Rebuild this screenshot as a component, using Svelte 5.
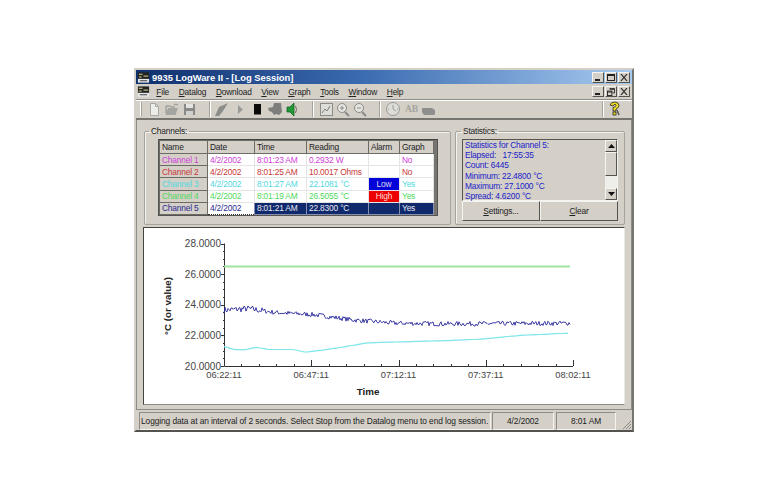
<script>
  const rows = [
    { name: 'Channel 1', c: '#d040d8', date: '4/2/2002', time: '8:01:23 AM', reading: '0.2932 W', alarm: '', graph: 'No' },
    { name: 'Channel 2', c: '#c83838', date: '4/2/2002', time: '8:01:25 AM', reading: '10.0017 Ohms', alarm: '', graph: 'No' },
    { name: 'Channel 3', c: '#50d8e0', date: '4/2/2002', time: '8:01:27 AM', reading: '22.1081 °C', alarm: 'Low', al: 'low', graph: 'Yes' },
    { name: 'Channel 4', c: '#50d860', date: '4/2/2002', time: '8:01:19 AM', reading: '26.5055 °C', alarm: 'High', al: 'high', graph: 'Yes' },
    { name: 'Channel 5', c: '#fff', nc: '#2a2a90', date: '4/2/2002', time: '8:01:21 AM', reading: '22.8300 °C', alarm: '', graph: 'Yes', sel: true }
  ];
  const stats = ['Statistics for Channel 5:', 'Elapsed:   17:55:35', 'Count: 6445', 'Minimum: 22.4800 °C', 'Maximum: 27.1000 °C', 'Spread: 4.6200 °C'];
  const menu = [['F', 'ile'], ['D', 'atalog'], ['D', 'ownload'], ['V', 'iew'], ['G', 'raph'], ['T', 'ools'], ['W', 'indow'], ['H', 'elp']];

  const X0 = 80, X1 = 429, YB = 138, YT = 15.5;
  const yOf = (v) => YB - ((v - 20) / 8) * (YB - YT);
  let seed = 7;
  const rnd = () => (seed = (seed * 16807) % 2147483647) / 2147483647;
  const interp = (pts, x) => {
    for (let i = 1; i < pts.length; i++) {
      if (x <= pts[i][0]) {
        const [a, b] = pts[i - 1], [c, d] = pts[i];
        return b + ((x - a) / (c - a)) * (d - b);
      }
    }
    return pts[pts.length - 1][1];
  };
  const blueBase = [[80, 23.65], [104, 23.75], [130, 23.5], [170, 23.35], [210, 23.0], [250, 22.8], [300, 22.75], [430, 22.8]];
  const cyanBase = [[80, 21.27], [90, 21.08], [100, 21.05], [112, 21.22], [125, 21.08], [150, 21.08], [161, 20.9], [180, 21.05], [200, 21.25], [222, 21.5], [240, 21.55], [300, 21.65], [336, 21.75], [376, 22.0], [426, 22.15]];
  let blue = '';
  for (let x = 80; x <= 426; x += 1) {
    const n = (rnd() - 0.5) * (x < 120 ? 0.42 : 0.3);
    blue += `${x === 80 ? 'M' : 'L'}${x} ${yOf(interp(blueBase, x) + n).toFixed(1)}`;
  }
  let cyan = '';
  for (let x = 80; x <= 426; x += 4) {
    cyan += `${x === 80 ? 'M' : 'L'}${x} ${yOf(interp(cyanBase, x)).toFixed(1)}`;
  }
  const yTicks = [28, 26, 24, 22, 20];
  const minorY = [];
  for (let v = 20; v <= 28; v += 0.5) minorY.push(v);
  const minorX = [];
  for (let i = 0; i <= 20; i++) minorX.push(X0 + (i * (X1 - X0)) / 20);
  const xLabels = ['06:22:11', '06:47:11', '07:12:11', '07:37:11', '08:02:11'];
</script>

<div class="page">
  <div class="win">
    <div class="title">
      <svg class="appicon" width="13" height="13" viewBox="0 0 14 13"><rect x="1" y="1" width="12" height="7" fill="#222"/><path d="M2 3h4M7 5h5M2 6h3" stroke="#e8e0a0"/><rect x="1" y="8" width="12" height="4" fill="#e8e8e8"/><path d="M3 10h8" stroke="#333"/></svg>
      <span class="ttext">9935 LogWare II - [Log Session]</span>
      <div class="caps">
        <span class="cap"><i class="min"></i></span>
        <span class="cap"><i class="max"></i></span>
        <span class="cap"><svg width="8" height="7" viewBox="0 0 9 8"><path d="M1 0l7 8M8 0l-7 8" stroke="#222" stroke-width="1.3"/></svg></span>
      </div>
    </div>

    <div class="menubar">
      <svg class="appicon" width="13" height="13" viewBox="0 0 14 13"><rect x="1" y="1" width="12" height="7" fill="#222"/><path d="M2 3h4M7 5h5M2 6h3" stroke="#e8e0a0"/><rect x="1" y="8" width="12" height="4" fill="#e8e8e8"/><path d="M3 10h8" stroke="#333"/></svg>
      <div class="menus">
        {#each menu as m}<span class="mi"><u>{m[0]}</u>{m[1]}</span>{/each}
      </div>
      <div class="caps">
        <span class="cap"><i class="min"></i></span>
        <span class="cap"><svg width="8" height="8" viewBox="0 0 9 9"><path d="M3 .5h5.500v5h-2M3 1.500h5.500" fill="none" stroke="#222"/><rect x=".5" y="3.500" width="5" height="5" fill="none" stroke="#222"/><path d="M0 4.500h6" stroke="#222"/></svg></span>
        <span class="cap"><svg width="8" height="7" viewBox="0 0 9 8"><path d="M1 0l7 8M8 0l-7 8" stroke="#222" stroke-width="1.3"/></svg></span>
      </div>
    </div>

    <div class="toolbar">
      <span class="grip"></span>
      <svg class="tb" width="60" height="18" viewBox="0 0 60 18">
        <path d="M5.500 3.500h5l3 3v9h-8z" fill="#ecece8" stroke="#a8a8a4"/><path d="M10.500 3.500v3h3" fill="none" stroke="#a8a8a4"/>
        <path d="M23 8h10l-2.500 7H20.500z" fill="#a4a4a0"/><path d="M21 13V6h4l1 1h4" fill="none" stroke="#8e8e8c"/><path d="M29 5q2-2 4 0" fill="none" stroke="#8e8e8c"/>
        <rect x="39" y="4" width="11" height="11" fill="#8a8a88"/><rect x="41" y="4" width="7" height="4" fill="#e4e4e0"/><rect x="41" y="11" width="7" height="4" fill="#d0d0cc"/>
      </svg>
      <span class="sep"></span>
      <svg class="tb" width="93" height="18" viewBox="0 0 93 18">
        <path d="M0 16 L4 7 L13 3 L8 11 L4 16z" fill="#8c8c8a"/>
        <path d="M23 5l5 4.500-5 4.500z" fill="#9a9a98"/>
        <rect x="39" y="4" width="7" height="10.500" fill="#0a0a0a"/>
        <path d="M53 8l5-1 1-4 7 0 1 9-3 3-3-1-2 1-2-3-3-1z" fill="#7e7e7c"/>
        <path d="M72 7h3l4-4v13l-4-4h-3z" fill="#1f9a35" stroke="#0d5a1c" stroke-width=".7"/><path d="M80.500 6q2 3.500 0 7" fill="none" stroke="#6a6a50"/>
      </svg>
      <span class="sep"></span>
      <svg class="tb" width="57" height="18" viewBox="0 0 57 18">
        <rect x="2.500" y="3.500" width="12" height="12" fill="#dcdcd8" stroke="#8a8a88"/><path d="M4 13l3-4 2 2 3-5" fill="none" stroke="#808080"/>
        <circle cx="24" cy="8" r="4.500" fill="#e4e4e0" stroke="#8a8a88"/><path d="M27 12l4 4" stroke="#8a8a88" stroke-width="2"/><path d="M22 8h4M24 6v4" stroke="#8a8a88"/>
        <circle cx="41" cy="8" r="4.500" fill="#e4e4e0" stroke="#8a8a88"/><path d="M44 12l4 4" stroke="#8a8a88" stroke-width="2"/><path d="M39 8h4" stroke="#8a8a88"/>
      </svg>
      <span class="sep"></span>
      <svg class="tb" width="16" height="18" viewBox="0 0 16 18"><circle cx="8" cy="9" r="6.500" fill="#dcdcd8" stroke="#9a9a98"/><path d="M8 5v4l3 2M3 9h1M12 9h1" fill="none" stroke="#9a9a98"/></svg>
      <span class="ab">AB</span>
      <svg class="tb blob" width="16" height="18" viewBox="0 0 16 18"><path d="M1 8h10l3 2v4l-1 1H3l-2-3z" fill="#8e8e8c"/></svg>
      <span class="spring"></span>
      <span class="sep end"></span>
      <svg class="tb help" width="18" height="18" viewBox="0 0 18 18"><path d="M5 5q1-3 5-3 4 .500 4 3.500 0 2-3 3.500v2H8V7.500q3-.500 3-2t-2-1L8 6z" fill="#f0e020" stroke="#222" stroke-width=".8"/><rect x="8" y="12" width="3" height="3" fill="#f0e020" stroke="#222" stroke-width=".8"/><path d="M12 10l2 5" stroke="#555" stroke-width="1.500"/></svg>
    </div>

    <div class="body">
      <div class="groups">
        <fieldset class="channels">
          <legend>Channels:</legend>
          <div class="gridwrap">
            <table>
              <colgroup><col class="c1"/><col class="c2"/><col class="c3"/><col class="c4"/><col class="c5"/><col class="c6"/></colgroup>
              <thead><tr><th>Name</th><th>Date</th><th>Time</th><th>Reading</th><th>Alarm</th><th>Graph</th></tr></thead>
              <tbody>
                {#each rows as r}
                  <tr class:sel={r.sel} style="color:{r.c}">
                    <th style="color:{r.nc ?? r.c}">{r.name}</th>
                    <td class:focus={r.sel}>{r.date}</td>
                    <td>{r.time}</td>
                    <td>{r.reading}</td>
                    <td class="alarm {r.al ?? ''}">{r.alarm}</td>
                    <td>{r.graph}</td>
                  </tr>
                {/each}
              </tbody>
            </table>
          </div>
        </fieldset>

        <fieldset class="stats">
          <legend>Statistics:</legend>
          <div class="listbox">
            <div class="lines">{#each stats as s}<div>{s}</div>{/each}</div>
            <div class="scroll">
              <span class="sbtn"><svg width="7" height="4" viewBox="0 0 7 4"><path d="M3.500 0l3.500 4H0z" fill="#111"/></svg></span>
              <span class="thumb"></span>
              <span class="track"></span>
              <span class="sbtn"><svg width="7" height="4" viewBox="0 0 7 4"><path d="M3.500 4L7 0H0z" fill="#111"/></svg></span>
            </div>
          </div>
          <div class="btns">
            <button><u>S</u>ettings...</button>
            <button><u>C</u>lear</button>
          </div>
        </fieldset>
      </div>

      <div class="chart">
        <svg width="480" height="176" viewBox="0 0 480 176">
          <g stroke="#333" fill="none">
            <path d="M{X0}.5 {YT}V{YB}.5H{X1}"/>
            {#each minorY as v}
              <path d="M{v % 2 === 0 ? X0 - 3 : X0 - 1} {Math.round(yOf(v)) + 0.5}H{X0}"/>
            {/each}
            {#each minorX as x, i}
              <path d="M{Math.round(x) + 0.5} {YB}V{i % 5 === 0 ? YB - 6 : YB - 2}"/>
            {/each}
          </g>
          <path d="M80 {yOf(26.5)}H426" stroke="#a0e4a0" stroke-width="2" fill="none"/>
          <path d={cyan} stroke="#7ce6ea" stroke-width="1.200" fill="none"/>
          <path d={blue} stroke="#28289c" stroke-width=".9" fill="none"/>
          {#each yTicks as v}
            <text class="tick" x={X0 - 3} y={yOf(v) + 3.500} text-anchor="end">{v.toFixed(4)}</text>
          {/each}
          {#each xLabels as l, i}
            <text class="tick x" x={X0 + (i * (X1 - X0)) / 4} y="150" text-anchor="middle">{l}</text>
          {/each}
          <text class="axis" x="224" y="167" text-anchor="middle">Time</text>
          <text class="axis" transform="translate(27 78) rotate(-90)" text-anchor="middle">°C (or value)</text>
        </svg>
      </div>
    </div>

    <div class="status">
      <span class="pane p1">Logging data at an interval of 2 seconds. Select Stop from the Datalog menu to end log session.</span>
      <span class="pane p2">4/2/2002</span>
      <span class="pane p3">8:01 AM</span>
      <svg class="sizer" width="12" height="12" viewBox="0 0 12 12"><path d="M11 3l-8 8M11 6l-5 5M11 9l-2 2" stroke="#8a8a86" fill="none"/></svg>
    </div>
  </div>
</div>

<style>
  :global(body) { background: #fff; }
  .page { width: 768px; height: 500px; padding: 68px 0 0 134px; box-sizing: border-box; overflow: hidden; }
  .win {
    width: 500px; height: 364px; box-sizing: border-box; background: #d4d0c8;
    border: 2px solid #d4d0c8; border-right-color: #77756f; border-bottom-color: #55534f;
    display: flex; flex-direction: column;
    font-family: "Liberation Sans", Arial, sans-serif; font-size: 8.4px; letter-spacing: -0.18px; color: #222;
  }
  .title {
    height: 14px; flex: none; display: flex; align-items: center; gap: 2px;
    background: linear-gradient(90deg, #10306c 0%, #3a6ab0 45%, #a6caf0 100%);
    color: #fff; font-weight: 700; font-size: 9.4px; letter-spacing: 0; padding-left: 1px;
  }
  .caps { margin-left: auto; display: flex; gap: 1px; padding-right: 2px; }
  .cap {
    width: 12px; height: 11px; background: #d4d0c8; box-sizing: border-box; display: flex;
    align-items: center; justify-content: center; position: relative;
    border: 1px solid; border-color: #f4f4f0 #55534f #55534f #f4f4f0;
  }
  .min { position: absolute; left: 2px; bottom: 1px; width: 5px; height: 2px; background: #222; }
  .max { width: 8px; height: 7px; box-sizing: border-box; border: 1px solid #222; border-top-width: 2px; }
  .menubar { height: 15px; flex: none; display: flex; align-items: center; padding-left: 1px; }
  .menus { display: flex; margin-left: 1.500px; }
  .mi { padding: 0 4.800px; }
  .toolbar {
    height: 21px; flex: none; display: flex; align-items: center; box-sizing: border-box;
    border-top: 1px solid #8e8c86; border-bottom: 2px solid #77756f; padding-left: 4px;
    box-shadow: inset 0 1px 0 #fff;
  }
  .grip { width: 2px; height: 14px; border-left: 1px solid #fff; border-right: 1px solid #a5a39c; box-sizing: border-box; margin-right: 3px; }
  .tb { flex: none; }
  .sep { width: 2px; height: 16px; flex: none; border-left: 1px solid #a5a39c; border-right: 1px solid #fff; box-sizing: border-box; margin: 0 4px; }
  .ab { font-family: "Liberation Serif", serif; font-weight: 700; color: #a2a29e; font-size: 9.5px; letter-spacing: 0; margin-left: 4px; }
  .blob { margin-left: 3px; }
  .spring { flex: 1; }
  .sep.end { margin: 0 1px 0 0; }
  .help { margin-right: 9px; }
  .body {
    flex: none; height: 290px; display: flex; flex-direction: column; padding: 7px 6px 0; gap: 2px;
    border-left: 1px solid #8e8c86; border-right: 1px solid #8e8c86; border-bottom: 1px solid #8e8c86;
    box-sizing: border-box;
  }
  .groups { display: flex; gap: 4px; height: 98px; flex: none; margin-left: 1px; }
  fieldset {
    margin: 0; min-width: 0; box-sizing: border-box; height: 98px;
    border: 1px solid #a5a39c; border-radius: 2px; box-shadow: inset 1px 1px 0 #f2f2ee;
  }
  legend { padding: 0 2px; margin-left: -1px; line-height: 9px; }
  .channels legend { margin-left: -9px; }
  .channels { width: 307px; padding: 3px 0 0 13px; }
  .gridwrap { width: 280px; background: #777570; border: 1px solid #55534f; border-top-color: #444; box-sizing: border-box; }
  table { border-collapse: collapse; table-layout: fixed; width: 274px; background: #fff; }
  .c1 { width: 48px; } .c2 { width: 47px; } .c3 { width: 52px; } .c4 { width: 62px; } .c5 { width: 31px; } .c6 { width: 34px; }
  th, td { height: 12.200px; padding: 0 0 0 2px; font-weight: 400; text-align: left; white-space: nowrap; overflow: hidden; box-sizing: border-box; line-height: 10px; }
  th { background: #d4d0c8; border: 1px solid #6d6b66; }
  thead th { color: #222; height: 13px; }
  td { border: 1px solid #e4e4e4; }
  tr.sel td { background: #10286c; border-color: #8890b0; color: #e8e8f0; }
  tr.sel td.focus { background: #fff; color: #2a2a90; border: 1px dotted #333; }
  td.alarm { text-align: center; padding: 0; color: #fff; }
  td.low { background: #0000d8; color: #dde; }
  td.high { background: #ee0000; color: #fdd; }
  .stats { width: 170px; padding: 3px 6px 0; }
  .listbox { display: flex; height: 62px; background: #d4d0c8; box-sizing: border-box; border: 1px solid; border-color: #55534f #f4f4f0 #f4f4f0 #55534f; }
  .lines { flex: 1; color: #2020c8; line-height: 10.200px; padding: 0 0 0 2px; white-space: pre; }
  .scroll { width: 12px; display: flex; flex-direction: column; }
  .sbtn {
    height: 12px; flex: none; background: #d4d0c8; display: flex; align-items: center; justify-content: center; box-sizing: border-box;
    border: 1px solid; border-color: #f4f4f0 #55534f #55534f #f4f4f0;
  }
  .thumb { height: 24px; flex: none; background: #d4d0c8; box-sizing: border-box; border: 1px solid; border-color: #f4f4f0 #55534f #55534f #f4f4f0; }
  .track { flex: 1; background: #eeeeea; }
  .btns { display: flex; }
  button {
    flex: 1; height: 20px; padding: 0; font: inherit; letter-spacing: inherit; color: #222; background: #d4d0c8; box-sizing: border-box;
    border: 1px solid; border-color: #f4f4f0 #55534f #55534f #f4f4f0;
  }
  .chart {
    flex: none; width: 482px; height: 178px; background: #fff; box-sizing: border-box; overflow: hidden;
    border: 1px solid; border-color: #444 #e8e8e4 #8e8c86 #444;
  }
  .chart svg { display: block; }
  .tick { font-family: "Liberation Sans", Arial, sans-serif; font-size: 10px; fill: #444; letter-spacing: 0; }
  .tick.x { font-size: 9.3px; }
  .axis { font-family: "Liberation Sans", Arial, sans-serif; font-size: 9.8px; font-weight: 700; fill: #222; letter-spacing: 0; }
  .status { height: 20px; flex: none; display: flex; align-items: flex-end; padding-left: 3px; box-sizing: border-box; position: relative; letter-spacing: -0.09px; }
  .pane { height: 18px; flex: none; box-sizing: border-box; display: flex; align-items: center; justify-content: center; border: 1px solid; border-color: #8e8c86 #f4f4f0 #f4f4f0 #8e8c86; white-space: nowrap; overflow: hidden; }
  .p1 { width: 352px; justify-content: flex-start; padding-left: 1px; margin-right: 1px; }
  .p2 { width: 62px; margin-right: 2px; }
  .p3 { width: 60px; }
  .sizer { position: absolute; right: 0; bottom: 0; }
</style>
